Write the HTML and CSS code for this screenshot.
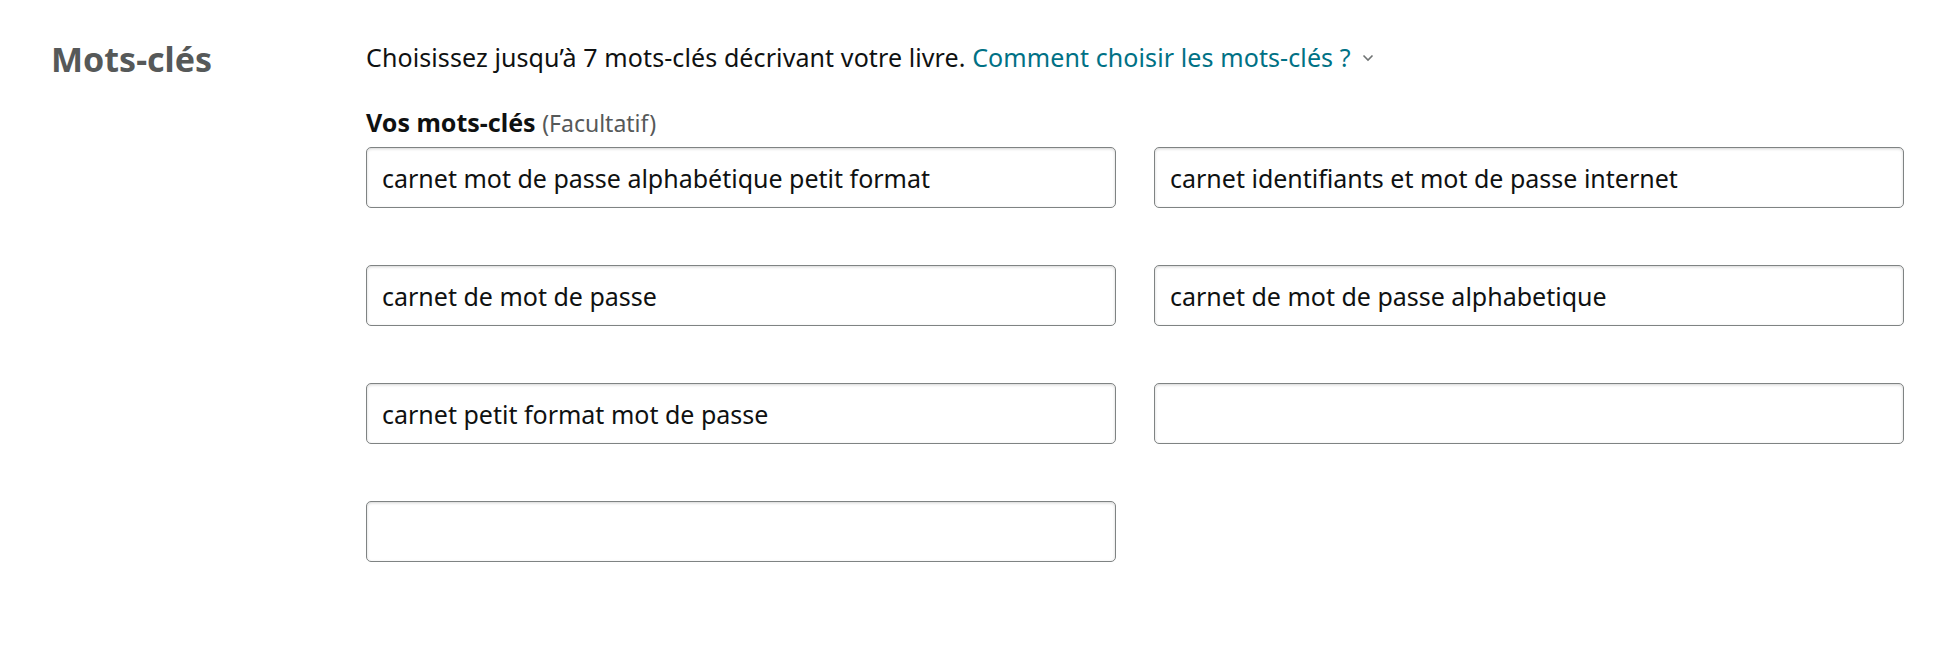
FILE: index.html
```html
<!DOCTYPE html>
<html lang="fr">
<head>
<meta charset="utf-8">
<title>Mots-clés</title>
<link rel="stylesheet" href="styles.css">
</head>
<body>
<section class="section">
  <h2 class="section-title">Mots-clés</h2>
  <div class="section-body">
    <p class="intro">Choisissez jusqu’à 7 mots-clés décrivant votre livre. <a class="help-link" href="#">Comment choisir les mots-clés ?</a><svg class="chevron" width="12" height="8" viewBox="0 0 12 8"><path d="M1.5 1.5 L6 6 L10.5 1.5" fill="none" stroke="#6f7373" stroke-width="1.6"/></svg></p>
    <div class="field-label"><strong>Vos mots-clés</strong> <span class="optional">(Facultatif)</span></div>
    <div class="keyword-grid">
      <input class="keyword-input" type="text" value="carnet mot de passe alphabétique petit format">
      <input class="keyword-input" type="text" value="carnet identifiants et mot de passe internet">
      <input class="keyword-input" type="text" value="carnet de mot de passe">
      <input class="keyword-input" type="text" value="carnet de mot de passe alphabetique">
      <input class="keyword-input" type="text" value="carnet petit format mot de passe">
      <input class="keyword-input" type="text" value="">
      <input class="keyword-input" type="text" value="">
    </div>
  </div>
</section>
</body>
</html>
```
FILE: styles.css
```css
html, body {
  margin: 0;
  background: #ffffff;
}
body {
  font-family: "Noto Sans", "Liberation Sans", sans-serif;
  color: #0f1111;
  font-size: 25px;
}
.section {
  display: grid;
  grid-template-columns: 315px 1538px;
  padding: 39px 0 0 51px;
}
.section-title {
  margin: 0;
  font-size: 34px;
  font-weight: 700;
  color: #565959;
  line-height: 40px;
}
.section-body {
  display: flex;
  flex-direction: column;
}
.intro {
  margin: 0;
  line-height: 36px;
  display: flex;
  align-items: center;
  white-space: pre;
  letter-spacing: 0.1px;
}
.help-link {
  color: #007185;
  text-decoration: none;
}
.chevron {
  margin-left: 11px;
  margin-top: 2px;
}
.field-label {
  margin-top: 32px;
  line-height: 30px;
}
.field-label strong {
  font-weight: 700;
}
.optional {
  color: #565959;
  font-size: 23px;
}
.keyword-grid {
  margin-top: 9px;
  display: grid;
  grid-template-columns: 750px 750px;
  column-gap: 38px;
  row-gap: 57px;
}
.keyword-input {
  box-sizing: border-box;
  height: 61px;
  width: 750px;
  margin: 0;
  padding: 0 15px;
  border: 1px solid #7f8383;
  border-radius: 5px;
  box-shadow: inset 0 1px 3px rgba(15, 17, 17, 0.18);
  font-family: "Noto Sans", "Liberation Sans", sans-serif;
  font-size: 25px;
  color: #0f1111;
  background: #ffffff;
  outline: none;
}
```
